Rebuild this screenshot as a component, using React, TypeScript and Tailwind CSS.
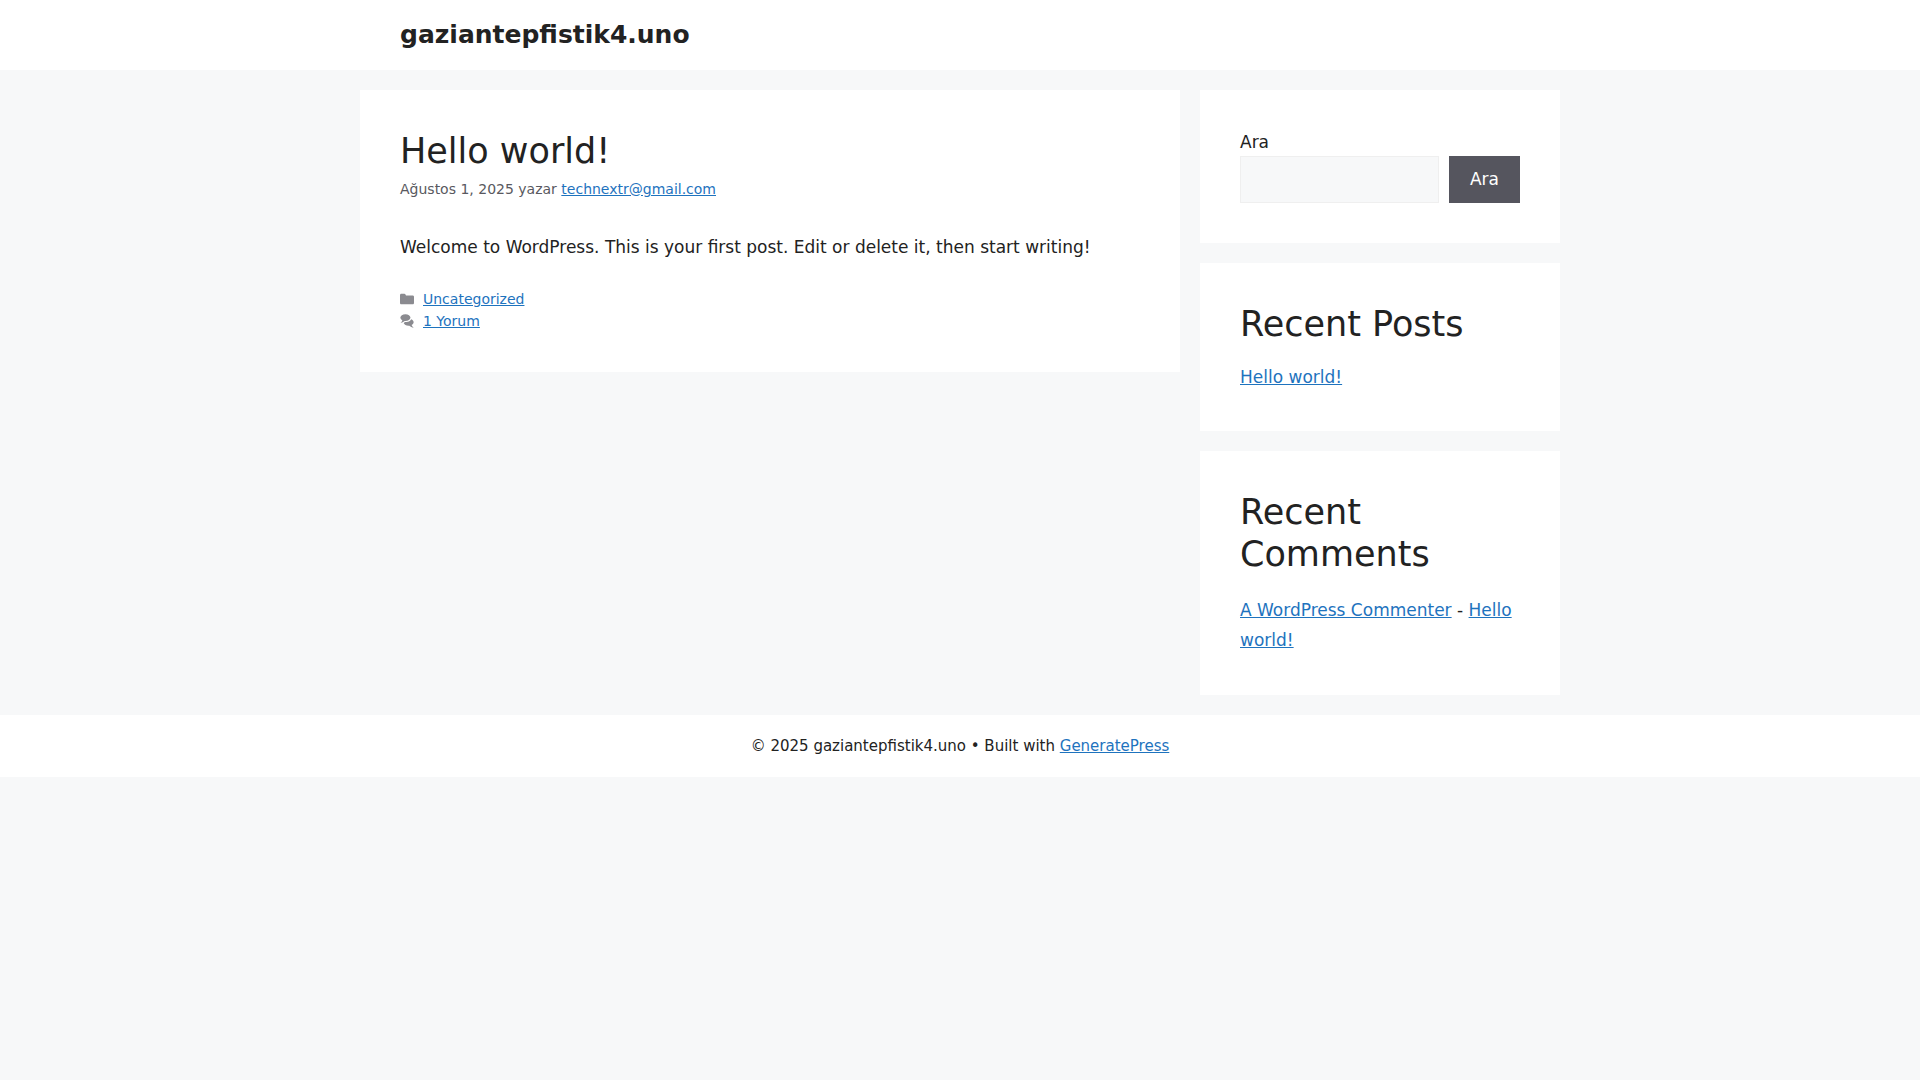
import type { ReactNode } from "react";

const recentPosts = [{ title: "Hello world!", href: "#hello-world" }];

const recentComments = [
  {
    author: "A WordPress Commenter",
    authorHref: "#commenter",
    post: "Hello world!",
    postHref: "#hello-world",
  },
];

function TextLink({ href, children }: { href: string; children: ReactNode }) {
  return (
    <a href={href} className="text-[#1e73be] underline hover:text-black">
      {children}
    </a>
  );
}

function Widget({ title, children }: { title?: string; children: ReactNode }) {
  return (
    <section className="bg-white p-10">
      {title && (
        <h2 className="mb-5 text-[35px] leading-[42px]">{title}</h2>
      )}
      {children}
    </section>
  );
}

function FolderIcon() {
  return (
    <svg
      viewBox="0 0 512 512"
      aria-hidden="true"
      className="size-[14px] fill-[#8b8b90]"
    >
      <path d="M0 112c0-26.51 21.49-48 48-48h110.014a48 48 0 0143.592 27.907l12.349 26.791A16 16 0 00228.486 128H464c26.51 0 48 21.49 48 48v224c0 26.51-21.49 48-48 48H48c-26.51 0-48-21.49-48-48V112z" />
    </svg>
  );
}

function CommentsIcon() {
  return (
    <svg
      viewBox="0 0 512 512"
      aria-hidden="true"
      className="size-[14px] fill-[#8b8b90]"
    >
      <path d="M132.838 329.973a435.298 435.298 0 0016.769-9.004c13.363-7.574 26.587-16.142 37.419-25.507 7.544.597 15.27.925 23.098.925 54.905 0 105.634-15.311 143.285-41.28 23.728-16.365 43.115-37.692 54.155-62.645 54.699 22.205 91.498 63.272 91.498 110.286 0 42.186-29.558 79.498-75.09 102.828 23.46 49.216 75.09 101.709 75.09 101.709s-115.837-38.35-154.424-78.46c-9.956 1.12-20.297 1.758-30.793 1.758-88.727 0-162.927-43.071-181.007-100.61z" />
      <path d="M383.371 132.502c0 70.603-82.961 127.787-185.216 127.787-10.496 0-20.837-.639-30.793-1.757-38.587 40.093-154.424 78.42-154.424 78.42s51.63-52.472 75.09-101.67c-45.532-23.321-75.09-60.619-75.09-102.79C12.938 61.9 95.9 4.715 198.155 4.715 300.41 4.715 383.37 61.9 383.37 132.502z" />
    </svg>
  );
}

export default function App() {
  return (
    <div className="min-h-screen bg-[#f7f8f9] font-['DejaVu_Sans',sans-serif] text-[17px] leading-[26px] text-[#222222]">
      {/* Header */}
      <header className="bg-white">
        <div className="mx-auto max-w-[1200px] px-10 py-5">
          <p className="text-[25px] leading-[30px] font-bold">
            <a href="#home">gaziantepfistik4.uno</a>
          </p>
        </div>
      </header>

      <div className="mx-auto flex max-w-[1200px] flex-col gap-5 py-5 lg:flex-row lg:items-start">
        {/* Posts */}
        <main className="min-w-0 flex-1">
          <article className="bg-white p-10">
            <h1 className="text-[35px] leading-[42px]">
              <a href="#hello-world">Hello world!</a>
            </h1>
            <p className="mt-1.5 text-[14px] leading-[22px] text-[#595960]">
              Ağustos 1, 2025 yazar{" "}
              <TextLink href="#author">technextr@gmail.com</TextLink>
            </p>

            <p className="mt-[34px]">
              Welcome to WordPress. This is your first post. Edit or delete it,
              then start writing!
            </p>

            <footer className="mt-7 text-[14px] leading-[22px]">
              <div className="flex items-center gap-[9px]">
                <FolderIcon />
                <TextLink href="#uncategorized">Uncategorized</TextLink>
              </div>
              <div className="flex items-center gap-[9px]">
                <CommentsIcon />
                <TextLink href="#comments">1 Yorum</TextLink>
              </div>
            </footer>
          </article>
        </main>

        {/* Sidebar */}
        <aside className="flex flex-col gap-5 lg:w-[30%]">
          <Widget>
            <form role="search" onSubmit={(e) => e.preventDefault()}>
              <label htmlFor="search" className="block pb-0.5 leading-6">
                Ara
              </label>
              <div className="flex gap-[10px]">
                <input
                  id="search"
                  type="search"
                  className="h-[47px] min-w-0 flex-1 border border-[#efefef] bg-[#f7f8f9] px-2"
                />
                <button
                  type="submit"
                  className="bg-[#55555e] px-[21px] pb-0.5 text-white hover:bg-[#3f4047]"
                >
                  Ara
                </button>
              </div>
            </form>
          </Widget>

          <Widget title="Recent Posts">
            <ul className="leading-6">
              {recentPosts.map((post) => (
                <li key={post.href} className="pb-0.5">
                  <TextLink href={post.href}>{post.title}</TextLink>
                </li>
              ))}
            </ul>
          </Widget>

          <Widget title="Recent Comments">
            <ol className="leading-[30px]">
              {recentComments.map((comment) => (
                <li key={comment.authorHref}>
                  <TextLink href={comment.authorHref}>{comment.author}</TextLink>
                  {" - "}
                  <TextLink href={comment.postHref}>{comment.post}</TextLink>
                </li>
              ))}
            </ol>
          </Widget>
        </aside>
      </div>

      {/* Footer */}
      <footer className="bg-white px-10 py-5 text-center text-[15px] leading-[22px]">
        © 2025 gaziantepfistik4.uno • Built with{" "}
        <TextLink href="#generatepress">GeneratePress</TextLink>
      </footer>
    </div>
  );
}
